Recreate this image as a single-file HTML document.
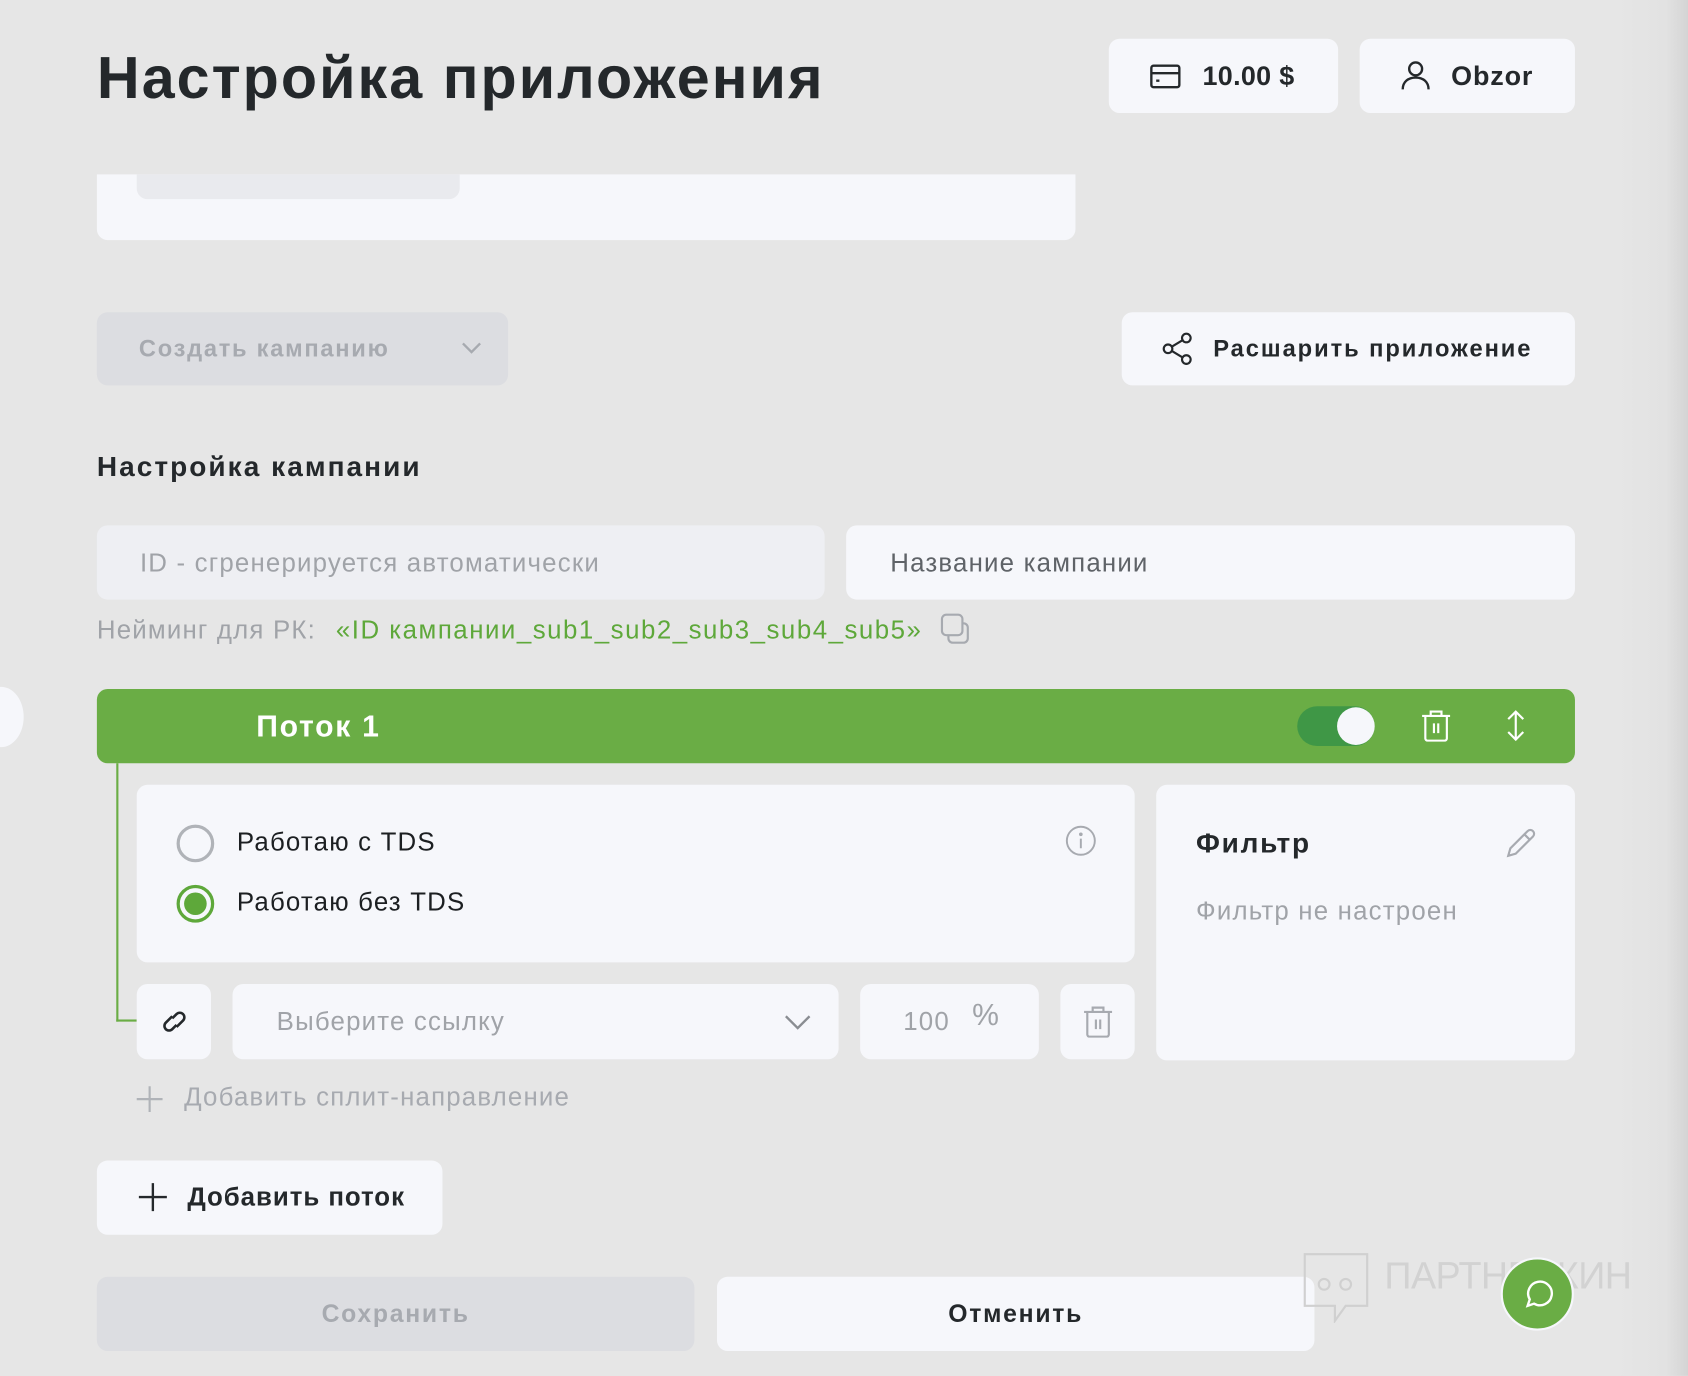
<!DOCTYPE html>
<html><head><meta charset="utf-8"><style>
*{box-sizing:border-box;margin:0;padding:0}
html,body{width:1688px;height:1376px;overflow:hidden;background:#e6e6e6}
#w{position:absolute;left:0;top:0;width:1568px;height:1278px;transform:scale(1.07653);transform-origin:0 0;font-family:"Liberation Sans","DejaVu Sans",sans-serif;color:#24282b;letter-spacing:1.1px}
.a{position:absolute;white-space:nowrap}
.box{position:absolute;background:#f6f7fb;border-radius:10px}
.b{font-weight:bold;letter-spacing:1.6px}
svg{position:absolute;fill:none}
</style></head><body><div id="w">
<div class="a" style="left:1500px;top:0;width:68px;height:1278px;background:linear-gradient(90deg,#e6e6e6,#e2e2e2 70%,#d4d4d4)"></div>
<div class="a" style="left:-20px;top:638px;width:42px;height:56px;border-radius:50%;background:#f6f7fb"></div>

<div class="a b" style="left:90px;top:40px;font-size:55px;letter-spacing:1.9px">Настройка приложения</div>
<div class="box" style="left:1030px;top:36px;width:213px;height:69px"></div>
<svg style="left:1068px;top:58px" width="29" height="26" viewBox="0 0 29 26" stroke="#24282b" stroke-width="2.2"><rect x="1.5" y="3" width="26" height="20" rx="2"/><line x1="1.5" y1="10" x2="27.5" y2="10"/><line x1="6" y1="17" x2="9" y2="17"/></svg>
<div class="a b" style="left:1117px;top:57px;font-size:25px;letter-spacing:0.3px">10.00 $</div>
<div class="box" style="left:1263px;top:36px;width:200px;height:69px"></div>
<svg style="left:1300px;top:55px" width="30" height="30" viewBox="0 0 30 30" stroke="#24282b" stroke-width="2.2"><circle cx="15" cy="9" r="6"/><path d="M3 28c0-7 5-11 12-11s12 4 12 11"/></svg>
<div class="a b" style="left:1348px;top:57px;font-size:25px;letter-spacing:0.8px">Obzor</div>

<div class="box" style="left:90px;top:162px;width:909px;height:61px;border-radius:0 0 10px 10px"></div>
<div class="a" style="left:127px;top:162px;width:300px;height:23px;background:#e9eaee;border-radius:0 0 10px 10px"></div>

<div class="box" style="left:90px;top:290px;width:382px;height:68px;background:#dcdde1"></div>
<div class="a b" style="left:129px;top:311px;font-size:22px;color:#a7aab0">Создать кампанию</div>
<svg style="left:428px;top:317px" width="20" height="12" viewBox="0 0 20 12" stroke="#a7aab0" stroke-width="2.2"><path d="M2 2l8 8 8-8"/></svg>
<div class="box" style="left:1042px;top:290px;width:421px;height:68px"></div>
<svg style="left:1078px;top:308px" width="32" height="32" viewBox="0 0 32 32" stroke="#24282b" stroke-width="2"><circle cx="24" cy="6" r="4"/><circle cx="7" cy="16" r="4"/><circle cx="24" cy="26" r="4"/><path d="M10.5 14l10-6M10.5 18l10 6"/></svg>
<div class="a b" style="left:1127px;top:311px;font-size:22px;letter-spacing:1.8px">Расшарить приложение</div>

<div class="a b" style="left:90px;top:418px;font-size:26px;letter-spacing:1.9px">Настройка кампании</div>
<div class="box" style="left:90px;top:488px;width:676px;height:69px;background:#eeeff3"></div>
<div class="a" style="left:130px;top:510px;font-size:24px;color:#a0a3a8">ID - сгренерируется автоматически</div>
<div class="box" style="left:786px;top:488px;width:677px;height:69px"></div>
<div class="a" style="left:827px;top:510px;font-size:24px;color:#5f6368">Название кампании</div>
<div class="a" style="left:90px;top:572px;font-size:24px;color:#a0a3a8">Нейминг для РК:</div>
<div class="a" style="left:312px;top:572px;font-size:24px;color:#5ea83a;letter-spacing:1.4px">«ID кампании_sub1_sub2_sub3_sub4_sub5»</div>
<svg style="left:873px;top:569px" width="30" height="30" viewBox="0 0 30 30" stroke="#a7aab0" stroke-width="2"><rect x="2" y="2" width="19" height="19" rx="4"/><path d="M8 21v3a4 4 0 0 0 4 4h10a4 4 0 0 0 4-4V14a4 4 0 0 0-4-4h-1"/></svg>

<div class="a" style="left:90px;top:640px;width:1373px;height:69px;background:#6aad45;border-radius:10px"></div>
<div class="a b" style="left:238px;top:659px;font-size:28px;color:#fff">Поток 1</div>
<div class="a" style="left:1205px;top:656px;width:72px;height:37px;border-radius:19px;background:#3f9746"></div>
<div class="a" style="left:1242px;top:657px;width:35px;height:35px;border-radius:50%;background:#f6f7fb"></div>
<svg style="left:1320px;top:659px" width="28" height="30" viewBox="0 0 28 30" stroke="#fff" stroke-width="2"><path d="M1 6h26M9 6V2h10v4M4 6v21a2 2 0 0 0 2 2h16a2 2 0 0 0 2-2V6M12 13v9M16 13v9"/></svg>
<svg style="left:1396px;top:659px" width="24" height="30" viewBox="0 0 24 30" stroke="#fff" stroke-width="2"><path d="M12 2v26M5 9l7-7 7 7M5 21l7 7 7-7"/></svg>

<div class="a" style="left:108px;top:709px;width:2px;height:240px;background:#6aad45"></div>
<div class="a" style="left:108px;top:947px;width:19px;height:2px;background:#6aad45"></div>

<div class="box" style="left:127px;top:729px;width:927px;height:165px"></div>
<div class="a" style="left:164px;top:766px;width:35px;height:35px;border-radius:50%;border:3px solid #b0b3b8"></div>
<div class="a" style="left:220px;top:769px;font-size:24px;color:#1c1f22">Работаю с TDS</div>
<div class="a" style="left:164px;top:822px;width:35px;height:35px;border-radius:50%;border:3px solid #5ea83a;background:#f6f7fb"></div>
<div class="a" style="left:171px;top:829px;width:21px;height:21px;border-radius:50%;background:#5ea83a"></div>
<div class="a" style="left:220px;top:825px;font-size:24px;color:#1c1f22">Работаю без TDS</div>
<svg style="left:989px;top:766px" width="30" height="30" viewBox="0 0 30 30" stroke="#a7aab0" stroke-width="1.8"><circle cx="15" cy="15" r="13"/><path d="M15 13v9"/><circle cx="15" cy="9" r="0.8" fill="#a7aab0"/></svg>

<div class="box" style="left:1074px;top:729px;width:389px;height:256px"></div>
<div class="a b" style="left:1111px;top:768px;font-size:26px">Фильтр</div>
<svg style="left:1397px;top:767px" width="32" height="32" viewBox="0 0 32 32" stroke="#a7aab0" stroke-width="2"><path d="M4 28l2-7L22 5a3 3 0 0 1 5 5L11 26z M19 8l5 5"/></svg>
<div class="a" style="left:1111px;top:833px;font-size:24px;color:#a0a3a8">Фильтр не настроен</div>

<div class="box" style="left:127px;top:914px;width:69px;height:70px"></div>
<svg style="left:146px;top:934px" width="32" height="30" viewBox="0 0 32 30" stroke="#24282b" stroke-width="2.4"><path d="M14 10l-6 6a4 4 0 0 0 6 6l4-4M18 20l6-6a4 4 0 0 0-6-6l-4 4"/></svg>
<div class="box" style="left:216px;top:914px;width:563px;height:70px"></div>
<div class="a" style="left:257px;top:936px;font-size:24px;color:#a0a3a8">Выберите ссылку</div>
<svg style="left:728px;top:942px" width="26" height="15" viewBox="0 0 26 15" stroke="#8a8d92" stroke-width="2.2"><path d="M2 2l11 11 11-11"/></svg>
<div class="box" style="left:799px;top:914px;width:166px;height:70px"></div>
<div class="a" style="left:839px;top:936px;font-size:24px;color:#a0a3a8">100</div>
<div class="a" style="left:903px;top:927px;font-size:28px;color:#a0a3a8">%</div>
<div class="box" style="left:985px;top:914px;width:69px;height:70px"></div>
<svg style="left:1006px;top:934px" width="28" height="30" viewBox="0 0 28 30" stroke="#a7aab0" stroke-width="2"><path d="M1 6h26M9 6V2h10v4M4 6v21a2 2 0 0 0 2 2h16a2 2 0 0 0 2-2V6M12 13v9M16 13v9"/></svg>

<svg style="left:126px;top:1008px" width="26" height="26" viewBox="0 0 26 26" stroke="#b0b3b8" stroke-width="2"><path d="M13 1v24M1 13h24"/></svg>
<div class="a" style="left:171px;top:1006px;font-size:24px;color:#a7aab0">Добавить сплит-направление</div>

<div class="box" style="left:90px;top:1078px;width:321px;height:69px"></div>
<svg style="left:128px;top:1098px" width="28" height="28" viewBox="0 0 28 28" stroke="#24282b" stroke-width="2.2"><path d="M14 1v26M1 14h26"/></svg>
<div class="a b" style="left:174px;top:1099px;font-size:24px;letter-spacing:0.9px">Добавить поток</div>

<div class="box" style="left:90px;top:1186px;width:555px;height:69px;background:#dcdde1"></div>
<div class="a b" style="left:90px;top:1207px;width:555px;text-align:center;font-size:23px;color:#a7aab0">Сохранить</div>
<div class="box" style="left:666px;top:1186px;width:555px;height:69px"></div>
<div class="a b" style="left:666px;top:1207px;width:555px;text-align:center;font-size:23px">Отменить</div>

<svg style="left:1210px;top:1163px" width="62" height="66" viewBox="0 0 62 66" stroke="#d0d0d0" stroke-width="2"><path d="M2 2h58v48H40l-10 14V50H2z"/><circle cx="20" cy="30" r="5"/><circle cx="40" cy="30" r="5"/></svg>
<div class="a" style="left:1286px;top:1166px;font-size:35px;color:#d2d2d2;letter-spacing:-0.5px">ПАРТНЕРКИН</div>
<div class="a" style="left:1394px;top:1168px;width:68px;height:68px;border-radius:50%;background:#6aad45;border:2px solid #f6f7fb"></div>
<svg style="left:1413px;top:1187px" width="30" height="30" viewBox="0 0 30 30" stroke="#fff" stroke-width="2.2"><path d="M6 26l2-6a11 11 0 1 1 4 4z"/></svg>
</div></body></html>
